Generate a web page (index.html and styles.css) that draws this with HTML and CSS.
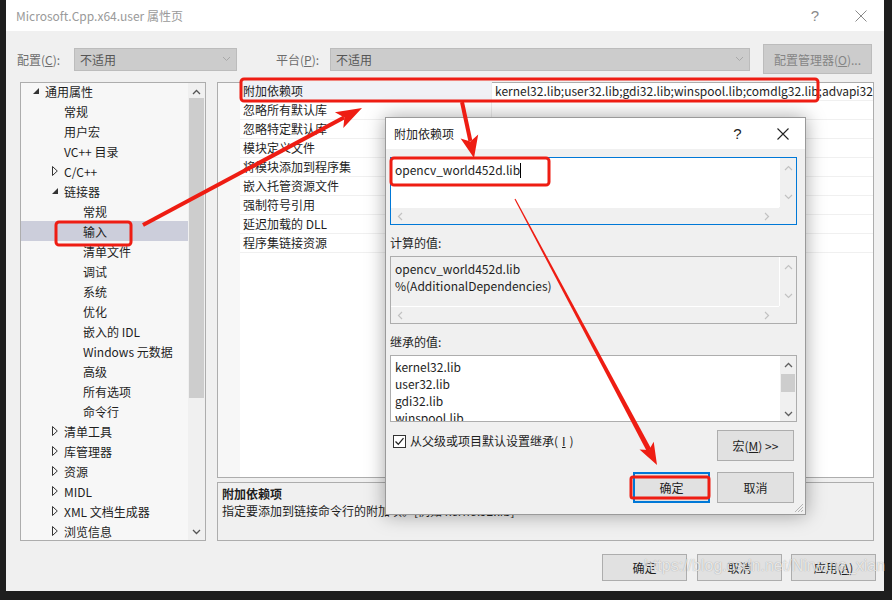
FILE: index.html
```html
<!DOCTYPE html>
<html lang="zh-CN">
<head>
    <meta charset="UTF-8">
    <title>Microsoft.Cpp.x64.user 属性页</title>
    <link rel="stylesheet" href="styles.css">
</head>
<body>

<div class="window">
    <div class="titlebar">
        <span class="title">Microsoft.Cpp.x64.user 属性页</span>
        <span class="tb-btn help">?</span>
        <span class="tb-btn">
            <svg width="12" height="12" viewBox="0 0 12 12"><path d="M0.5 0.5L11.5 11.5M11.5 0.5L0.5 11.5" stroke="#8a8a8a" stroke-width="1"/></svg>
        </span>
    </div>

    <div class="config-row">
        <span class="cfg-label">配置(<u>C</u>):</span>
        <div class="select sel-config">
            <span>不适用</span>
            <svg width="9" height="6" viewBox="0 0 9 6"><path d="M1 1L4.5 4.5L8 1" fill="none" stroke="#a8a8a8"/></svg>
        </div>
        <span class="cfg-label plat">平台(<u>P</u>):</span>
        <div class="select sel-platform">
            <span>不适用</span>
            <svg width="9" height="6" viewBox="0 0 9 6"><path d="M1 1L4.5 4.5L8 1" fill="none" stroke="#a8a8a8"/></svg>
        </div>
        <button class="cfg-mgr">配置管理器(<u>O</u>)...</button>
    </div>

    <div class="main">
        <!-- 左侧属性树 -->
        <div class="tree">
            <ul class="tree-list">
                <li class="tree-item lvl0"><span class="twisty"><svg width="6" height="6" viewBox="0 0 6 6"><path d="M6 0V6H0Z" fill="#333"/></svg></span>通用属性</li>
                <li class="tree-item lvl1"><span class="twisty"></span>常规</li>
                <li class="tree-item lvl1"><span class="twisty"></span>用户宏</li>
                <li class="tree-item lvl1"><span class="twisty"></span>VC++ 目录</li>
                <li class="tree-item lvl1"><span class="twisty"><svg width="6" height="10" viewBox="0 0 6 10"><path d="M0.5 0.5L5.3 5L0.5 9.5Z" fill="none" stroke="#333"/></svg></span>C/C++</li>
                <li class="tree-item lvl1"><span class="twisty"><svg width="6" height="6" viewBox="0 0 6 6"><path d="M6 0V6H0Z" fill="#333"/></svg></span>链接器</li>
                <li class="tree-item lvl2"><span class="twisty"></span>常规</li>
                <li class="tree-item lvl2 selected"><span class="twisty"></span>输入</li>
                <li class="tree-item lvl2"><span class="twisty"></span>清单文件</li>
                <li class="tree-item lvl2"><span class="twisty"></span>调试</li>
                <li class="tree-item lvl2"><span class="twisty"></span>系统</li>
                <li class="tree-item lvl2"><span class="twisty"></span>优化</li>
                <li class="tree-item lvl2"><span class="twisty"></span>嵌入的 IDL</li>
                <li class="tree-item lvl2"><span class="twisty"></span>Windows 元数据</li>
                <li class="tree-item lvl2"><span class="twisty"></span>高级</li>
                <li class="tree-item lvl2"><span class="twisty"></span>所有选项</li>
                <li class="tree-item lvl2"><span class="twisty"></span>命令行</li>
                <li class="tree-item lvl1"><span class="twisty"><svg width="6" height="10" viewBox="0 0 6 10"><path d="M0.5 0.5L5.3 5L0.5 9.5Z" fill="none" stroke="#333"/></svg></span>清单工具</li>
                <li class="tree-item lvl1"><span class="twisty"><svg width="6" height="10" viewBox="0 0 6 10"><path d="M0.5 0.5L5.3 5L0.5 9.5Z" fill="none" stroke="#333"/></svg></span>库管理器</li>
                <li class="tree-item lvl1"><span class="twisty"><svg width="6" height="10" viewBox="0 0 6 10"><path d="M0.5 0.5L5.3 5L0.5 9.5Z" fill="none" stroke="#333"/></svg></span>资源</li>
                <li class="tree-item lvl1"><span class="twisty"><svg width="6" height="10" viewBox="0 0 6 10"><path d="M0.5 0.5L5.3 5L0.5 9.5Z" fill="none" stroke="#333"/></svg></span>MIDL</li>
                <li class="tree-item lvl1"><span class="twisty"><svg width="6" height="10" viewBox="0 0 6 10"><path d="M0.5 0.5L5.3 5L0.5 9.5Z" fill="none" stroke="#333"/></svg></span>XML 文档生成器</li>
                <li class="tree-item lvl1"><span class="twisty"><svg width="6" height="10" viewBox="0 0 6 10"><path d="M0.5 0.5L5.3 5L0.5 9.5Z" fill="none" stroke="#333"/></svg></span>浏览信息</li>
            </ul>
            <div class="tree-scroll">
                <span class="sb-arrow"><svg width="9" height="6" viewBox="0 0 9 6"><path d="M1 5L4.5 1.5L8 5" fill="none" stroke="#555" stroke-width="1.3"/></svg></span>
                <div class="sb-track"><div class="sb-thumb tree-thumb"></div></div>
                <span class="sb-arrow"><svg width="9" height="6" viewBox="0 0 9 6"><path d="M1 1L4.5 4.5L8 1" fill="none" stroke="#555" stroke-width="1.3"/></svg></span>
            </div>
        </div>

        <!-- 右侧属性表格 -->
        <div class="right-col">
            <div class="grid">
                <div class="gutter"></div>
                <div class="rows">
                    <div class="row selected"><div class="name">附加依赖项</div><div class="value">kernel32.lib;user32.lib;gdi32.lib;winspool.lib;comdlg32.lib;advapi32.lib;shell32.lib</div></div>
                    <div class="row"><div class="name">忽略所有默认库</div><div class="value"></div></div>
                    <div class="row"><div class="name">忽略特定默认库</div><div class="value"></div></div>
                    <div class="row"><div class="name">模块定义文件</div><div class="value"></div></div>
                    <div class="row"><div class="name">将模块添加到程序集</div><div class="value"></div></div>
                    <div class="row"><div class="name">嵌入托管资源文件</div><div class="value"></div></div>
                    <div class="row"><div class="name">强制符号引用</div><div class="value"></div></div>
                    <div class="row"><div class="name">延迟加载的 DLL</div><div class="value"></div></div>
                    <div class="row"><div class="name">程序集链接资源</div><div class="value"></div></div>
                </div>
            </div>
            <div class="desc">
                <div class="desc-title">附加依赖项</div>
                <div>指定要添加到链接命令行的附加项。[例如 kernel32.lib]</div>
            </div>
        </div>
    </div>

    <div class="footer">
        <button class="btn">确定</button>
        <button class="btn">取消</button>
        <button class="btn apply">应用(<u>A</u>)</button>
    </div>

    <!-- 附加依赖项 对话框 -->
    <div class="dialog">
        <div class="dlg-title">
            <span class="title">附加依赖项</span>
            <span class="dlg-btn help">?</span>
            <span class="dlg-btn">
                <svg width="12" height="12" viewBox="0 0 12 12"><path d="M0.5 0.5L11.5 11.5M11.5 0.5L0.5 11.5" stroke="#222" stroke-width="1.1"/></svg>
            </span>
        </div>
        <div class="dlg-body">
            <div class="box editbox">
                <div class="box-text">opencv_world452d.lib<span class="caret"></span></div>
                <div class="vsb">
                    <svg width="9" height="6" viewBox="0 0 9 6"><path d="M1 5L4.5 1.5L8 5" fill="none" stroke="#c2c2c2" stroke-width="1.2"/></svg>
                    <svg width="9" height="6" viewBox="0 0 9 6"><path d="M1 1L4.5 4.5L8 1" fill="none" stroke="#c2c2c2" stroke-width="1.2"/></svg>
                </div>
                <div class="hsb">
                    <svg width="6" height="9" viewBox="0 0 6 9"><path d="M5 1L1.5 4.5L5 8" fill="none" stroke="#c2c2c2" stroke-width="1.2"/></svg>
                    <svg width="6" height="9" viewBox="0 0 6 9"><path d="M1 1L4.5 4.5L1 8" fill="none" stroke="#c2c2c2" stroke-width="1.2"/></svg>
                </div>
                <div class="corner"></div>
            </div>

            <div class="dlg-label">计算的值:</div>
            <div class="box computed">
                <div class="box-text">opencv_world452d.lib<br>%(AdditionalDependencies)</div>
                <div class="vsb">
                    <svg width="9" height="6" viewBox="0 0 9 6"><path d="M1 5L4.5 1.5L8 5" fill="none" stroke="#c2c2c2" stroke-width="1.2"/></svg>
                    <svg width="9" height="6" viewBox="0 0 9 6"><path d="M1 1L4.5 4.5L8 1" fill="none" stroke="#c2c2c2" stroke-width="1.2"/></svg>
                </div>
                <div class="hsb">
                    <svg width="6" height="9" viewBox="0 0 6 9"><path d="M5 1L1.5 4.5L5 8" fill="none" stroke="#c2c2c2" stroke-width="1.2"/></svg>
                    <svg width="6" height="9" viewBox="0 0 6 9"><path d="M1 1L4.5 4.5L1 8" fill="none" stroke="#c2c2c2" stroke-width="1.2"/></svg>
                </div>
                <div class="corner"></div>
            </div>

            <div class="dlg-label">继承的值:</div>
            <div class="box inherited">
                <div class="box-text">kernel32.lib<br>user32.lib<br>gdi32.lib<br>winspool.lib</div>
                <div class="vsb dark">
                    <svg width="9" height="6" viewBox="0 0 9 6"><path d="M1 5L4.5 1.5L8 5" fill="none" stroke="#606060" stroke-width="1.3"/></svg>
                    <div class="sb-track"><div class="sb-thumb list-thumb"></div></div>
                    <svg width="9" height="6" viewBox="0 0 9 6"><path d="M1 1L4.5 4.5L8 1" fill="none" stroke="#606060" stroke-width="1.3"/></svg>
                </div>
            </div>

            <div class="check-row">
                <label class="chk">
                    <span class="chk-box">
                        <svg width="11" height="11" viewBox="0 0 11 11"><path d="M1.5 5.5L4.3 8.3L9.5 2.2" fill="none" stroke="#222" stroke-width="1.3"/></svg>
                    </span>
                    从父级或项目默认设置继承(<u>I</u>)
                </label>
                <button class="btn dlg-btn-size">宏(<u>M</u>) &gt;&gt;</button>
            </div>

            <div class="dlg-actions">
                <button class="btn dlg-btn-size default">确定</button>
                <button class="btn dlg-btn-size">取消</button>
            </div>
        </div>
        <svg class="grip" width="10" height="10" viewBox="0 0 10 10">
            <path d="M9 1L1 9M9 4L4 9M9 7L7 9" stroke="#b5b5b5" stroke-width="1"/>
        </svg>
    </div>
</div>

<!-- 标注 -->
<svg class="marks" width="892" height="600" viewBox="0 0 892 600">
    <g fill="none" stroke="#ee1d13" stroke-width="3">
        <rect x="241" y="79" width="577" height="22" rx="3"/>
        <rect x="56" y="222" width="75" height="23" rx="3"/>
        <rect x="391" y="158" width="158" height="27" rx="3"/>
        <rect x="631" y="477" width="78" height="21" rx="2"/>
    </g>
    <g fill="#ee1d13">
        <line x1="143" y1="225" x2="344" y2="117.5" stroke="#ee1d13" stroke-width="4"/>
        <polygon points="362,108 343.3,128.1 344.4,117.4 334.9,112.3"/>
        <line x1="462" y1="102" x2="470.4" y2="141" stroke="#ee1d13" stroke-width="4"/>
        <polygon points="474,158 460.6,138.4 470.4,141.4 478.2,134.6"/>
        <polygon points="515.5,198.7 651.2,448.8 646.8,451.2 514.5,199.3"/>
        <polygon points="657,465 639.5,449.4 649,450 653.7,441.8"/>
    </g>
</svg>

<div class="watermark">https://blog.csdn.net/Nirvana_xian</div>

</body>
</html>
```

FILE: styles.css
```css
/* 基础 */
* {
    box-sizing: border-box;
}

body {
    margin: 0;
    width: 892px;
    height: 600px;
    overflow: hidden;
    position: relative;
    background-color: #1e1e1e;
    font-family: "Noto Sans CJK SC", "Microsoft YaHei", sans-serif;
    font-size: 12px;
    color: #1e1e1e;
}

button {
    font-family: inherit;
    font-size: 12px;
    padding: 0;
}

/* 主窗口 */
.window {
    position: relative;
    margin-left: 6px;
    width: 878px;
    height: 591px;
    background-color: #f0f0f0;
}

.titlebar {
    height: 31px;
    background-color: #fff;
    display: flex;
    align-items: center;
}

.titlebar .title {
    flex: 1;
    padding-left: 10px;
    color: #9a9a9a;
}

.tb-btn {
    width: 46px;
    height: 31px;
    display: flex;
    align-items: center;
    justify-content: center;
}

.tb-btn.help {
    font-family: "Liberation Sans", sans-serif;
    font-size: 15px;
    color: #8a8a8a;
}

/* 配置行 */
.config-row {
    display: flex;
    align-items: center;
    height: 30px;
    margin-top: 13px;
    padding-left: 11px;
}

.cfg-label {
    width: 57px;
    color: #6d6d6d;
}

.cfg-label.plat {
    margin-left: 39px;
    width: 54px;
}

.select {
    height: 23px;
    background-color: #cccccc;
    border: 1px solid #bcbcbc;
    display: flex;
    align-items: center;
    justify-content: space-between;
    padding: 0 5px 0 5px;
    color: #555;
}

.sel-config {
    width: 163px;
}

.sel-platform {
    width: 420px;
}

.cfg-mgr {
    margin-left: 13px;
    width: 109px;
    height: 30px;
    background-color: #cccccc;
    border: 1px solid #bcbcbc;
    color: #858585;
}

/* 主体 */
.main {
    display: flex;
    gap: 11px;
    height: 459px;
    margin-top: 8px;
    padding-left: 14px;
}

.tree {
    width: 186px;
    border: 1px solid #adadad;
    background-color: #f7f7f7;
    display: flex;
    overflow: hidden;
}

.tree-list {
    flex: 1;
    list-style: none;
    margin: -2px 0 0 0;
    padding: 0;
}

.tree-item {
    height: 20px;
    display: flex;
    align-items: center;
    white-space: nowrap;
}

.tree-item.lvl0 {
    padding-left: 10px;
}

.tree-item.lvl1 {
    padding-left: 29px;
}

.tree-item.lvl2 {
    padding-left: 48px;
}

.tree-item.selected {
    background-color: #cccedb;
}

.twisty {
    width: 14px;
    display: flex;
    align-items: center;
    padding-left: 2px;
}

.tree-scroll {
    width: 17px;
    background-color: #f0f0f0;
    display: flex;
    flex-direction: column;
}

.sb-arrow {
    height: 17px;
    display: flex;
    align-items: center;
    justify-content: center;
}

.sb-track {
    flex: 1;
    padding: 0 1px;
}

.sb-thumb {
    background-color: #cdcdcd;
}

.tree-thumb {
    height: 300px;
    margin-top: -2px;
}

/* 属性表格 */
.right-col {
    width: 657px;
    display: flex;
    flex-direction: column;
    gap: 4px;
}

.grid {
    height: 396px;
    border: 1px solid #adadad;
    background-color: #fff;
    display: flex;
}

.gutter {
    width: 22px;
    background-color: #f7f7f7;
}

.rows {
    flex: 1;
    margin-top: -1px;
    overflow: hidden;
}

.row {
    height: 19px;
    display: flex;
    border-bottom: 1px solid #f0f0f0;
    line-height: 18px;
}

.row .name {
    width: 252px;
    padding-left: 3px;
    border-right: 1px solid #ececec;
}

.row .value {
    flex: 1;
    padding-left: 3px;
    white-space: nowrap;
    overflow: hidden;
}

.row.selected .name {
    background-color: #f0f1f6;
}

.desc {
    height: 59px;
    border: 1px solid #adadad;
    background-color: #f0f0f0;
    padding: 2px 4px;
    line-height: 17px;
}

.desc-title {
    font-weight: bold;
}

/* 底部按钮 */
.footer {
    display: flex;
    justify-content: flex-end;
    gap: 10px;
    margin-top: 13px;
    padding-right: 8px;
}

.btn {
    height: 27px;
    width: 85px;
    background-color: #e1e1e1;
    border: 1px solid #adadad;
    color: #1e1e1e;
}

.btn.apply {
    margin-left: -1px;
}

/* 对话框 */
.dialog {
    position: absolute;
    left: 379px;
    top: 117px;
    width: 421px;
    height: 398px;
    background-color: #f0f0f0;
    border: 1px solid #9a9a9a;
    box-shadow: 0 0 18px rgba(0, 0, 0, 0.35);
}

.dlg-title {
    height: 31px;
    background-color: #fff;
    display: flex;
    align-items: center;
}

.dlg-title .title {
    flex: 1;
    padding-left: 8px;
    color: #222;
}

.dlg-btn {
    width: 45px;
    height: 31px;
    display: flex;
    align-items: center;
    justify-content: center;
}

.dlg-btn.help {
    font-family: "Liberation Sans", sans-serif;
    font-size: 15px;
    color: #222;
}

.dlg-body {
    padding: 8px 8px 0 4px;
}

.box {
    display: grid;
    grid-template-columns: 1fr 17px;
    grid-template-rows: 1fr 17px;
    border: 1px solid #adadad;
    line-height: 17px;
}

.editbox {
    height: 68px;
    border-color: #0078d7;
}

.computed {
    height: 68px;
}

.inherited {
    height: 67px;
    grid-template-rows: 1fr;
}

.box-text {
    padding: 3px 4px 0;
    background-color: #fff;
    overflow: hidden;
    white-space: nowrap;
}

.computed .box-text {
    background-color: #f0f0f0;
}

.inherited .box-text {
    padding-top: 2px;
}

.caret {
    display: inline-block;
    width: 1px;
    height: 15px;
    background-color: #000;
    vertical-align: -3px;
}

.vsb {
    background-color: #f0f0f0;
    border-left: 1px solid #fff;
    display: flex;
    flex-direction: column;
    align-items: center;
    justify-content: space-between;
    padding: 7px 0;
}

.vsb.dark {
    padding: 6px 0 4px;
}

.vsb.dark .sb-track {
    width: 100%;
    padding: 6px 1px 0;
}

.list-thumb {
    height: 18px;
}

.hsb {
    background-color: #f0f0f0;
    border-top: 1px solid #fff;
    display: flex;
    align-items: center;
    justify-content: space-between;
    padding: 0 9px 0 6px;
}

.corner {
    background-color: #f0f0f0;
}

.dlg-label {
    height: 16px;
    line-height: 16px;
    margin: 10px 0 5px;
}

.check-row {
    display: flex;
    align-items: flex-start;
    justify-content: space-between;
    margin-top: 8px;
    padding-right: 3px;
}

.chk {
    display: flex;
    align-items: center;
    gap: 4px;
    margin: 3px 0 0 3px;
    line-height: 16px;
}

.chk-box {
    width: 13px;
    height: 13px;
    border: 1px solid #333;
    background-color: #fff;
    display: flex;
    align-items: center;
    justify-content: center;
}

.dlg-btn-size {
    width: 77px;
    height: 31px;
}

.dlg-actions {
    display: flex;
    justify-content: flex-end;
    gap: 7px;
    margin-top: 11px;
    padding-right: 3px;
}

.btn.default {
    border: 2px solid #0078d7;
}

.grip {
    position: absolute;
    right: 1px;
    bottom: 1px;
}

/* 标注层 */
.marks {
    position: absolute;
    left: 0;
    top: 0;
    pointer-events: none;
}

.watermark {
    position: absolute;
    left: 644px;
    top: 557px;
    font-family: "Liberation Sans", Arial, sans-serif;
    font-size: 16px;
    color: rgba(255, 255, 255, 0.75);
    text-shadow: 0 0 1px rgba(0, 0, 0, 0.35);
    white-space: nowrap;
}
```
